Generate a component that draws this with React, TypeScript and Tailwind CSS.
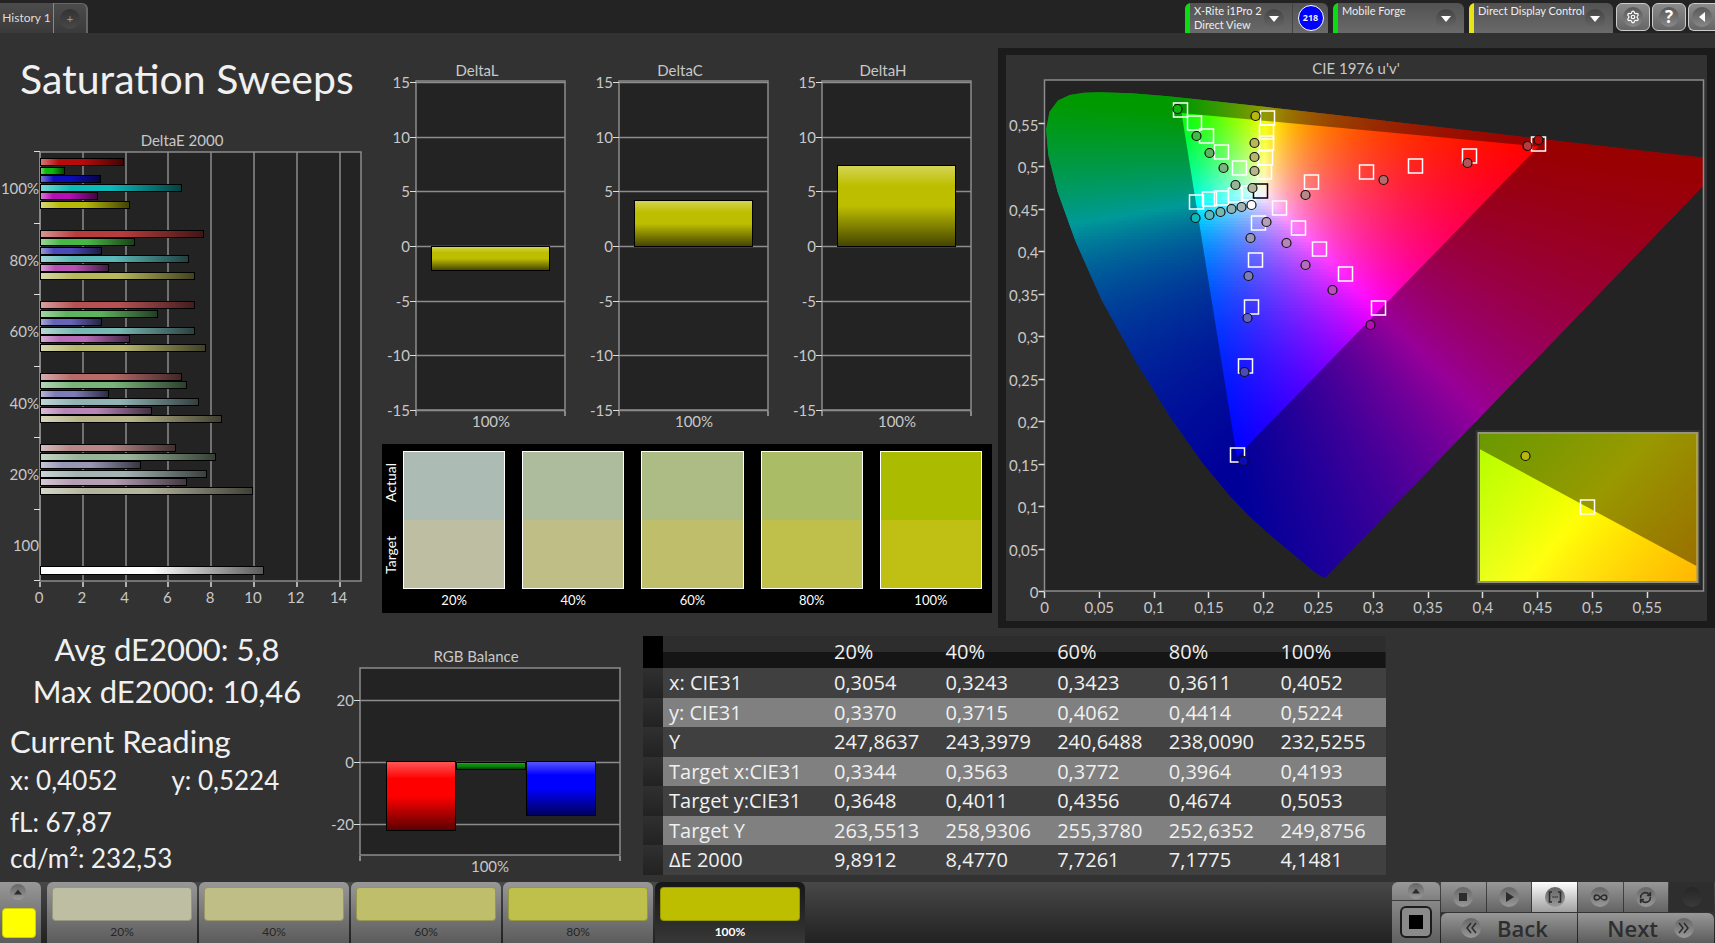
import type { ReactNode } from "react";
import clsx from "clsx";
import { Infinity as InfinityIcon, RefreshCw, Settings } from "lucide-react";

type Point = [number, number];

const AXIS = "#8c8c8c";
const LABEL = "#c8c8c8";

/* ---------- measured data ---------- */

const SWEEPS = [
  {
    label: "100%",
    values: [3.87, 1.1, 2.8, 6.6, 2.65, 4.15],
    colors: ["#b80c0c", "#0cb80c", "#0c0cb8", "#0cb8b8", "#b80cb8", "#b8b80c"],
  },
  {
    label: "80%",
    values: [7.6, 4.4, 2.85, 6.9, 3.2, 7.18],
    colors: ["#b83c3c", "#46b846", "#4a4ab8", "#5ab8b8", "#b850b8", "#b8b85a"],
  },
  {
    label: "60%",
    values: [7.2, 5.45, 2.85, 7.2, 4.15, 7.73],
    colors: ["#b85252", "#5eb45e", "#6464b8", "#78b8b4", "#b86cb8", "#b6b66c"],
  },
  {
    label: "40%",
    values: [6.6, 6.8, 3.2, 7.4, 5.17, 8.48],
    colors: ["#b86a6a", "#7ab47a", "#7c7cb6", "#90b4b4", "#b886b6", "#b6b488"],
  },
  {
    label: "20%",
    values: [6.3, 8.2, 4.67, 7.75, 6.8, 9.89],
    colors: ["#b88888", "#98b498", "#9898b6", "#a4b4b4", "#b69eb4", "#b4b49c"],
  },
];

const DELTAS = [
  { name: "DeltaL", value: -2.2 },
  { name: "DeltaC", value: 4.2 },
  { name: "DeltaH", value: 7.4 },
];

const SWATCHES = [
  { label: "20%", actual: "#acbcb4", target: "#bebea2" },
  { label: "40%", actual: "#adbc9d", target: "#bfbe86" },
  { label: "60%", actual: "#adbc84", target: "#bfbe6b" },
  { label: "80%", actual: "#abbc67", target: "#bfbf4c" },
  { label: "100%", actual: "#abbb00", target: "#c0c014" },
];

const TABLE = [
  ["x: CIE31", "0,3054", "0,3243", "0,3423", "0,3611", "0,4052"],
  ["y: CIE31", "0,3370", "0,3715", "0,4062", "0,4414", "0,5224"],
  ["Y", "247,8637", "243,3979", "240,6488", "238,0090", "232,5255"],
  ["Target x:CIE31", "0,3344", "0,3563", "0,3772", "0,3964", "0,4193"],
  ["Target y:CIE31", "0,3648", "0,4011", "0,4356", "0,4674", "0,5053"],
  ["Target Y", "263,5513", "258,9306", "255,3780", "252,6352", "249,8756"],
  ["ΔE 2000", "9,8912", "8,4770", "7,7261", "7,1775", "4,1481"],
];

const TARGETS: Point[] = [
  [136, 30], [150, 43], [162, 56], [177, 72], [195, 88],
  [152, 122], [165, 119], [177, 118], [191, 115], [204, 113],
  [220, 92], [221, 78], [222, 63], [222, 52], [223, 38],
  [235, 128], [254, 148], [275, 169], [301, 194], [334, 228],
  [214, 143], [211, 180], [207, 227], [201, 286], [193, 375],
  [267, 102], [322, 92], [371, 86], [425, 76], [494, 64],
];

// one list per primary, 100% first, in the order of SWEEPS[].colors
const READINGS: Point[][] = [
  [[494, 60], [483, 66], [423, 83], [339, 100], [261, 115]],
  [[133, 29], [152, 56], [165, 73], [179, 88], [191, 105]],
  [[199, 381], [200, 292], [203, 238], [204, 196], [206, 158]],
  [[151, 138], [165, 135], [176, 132], [187, 129], [197, 127]],
  [[326, 245], [288, 210], [261, 185], [242, 163], [222, 142]],
  [[211, 36], [210, 63], [210, 77], [210, 91], [208, 108]],
];

// spectral locus, CIE 1931 xy, 380nm to 700nm
const LOCUS: Point[] = [
  [0.1741, 0.005], [0.1726, 0.0048], [0.1689, 0.0069], [0.1644, 0.0109],
  [0.1566, 0.0177], [0.151, 0.0227], [0.144, 0.0297], [0.1355, 0.0399],
  [0.1241, 0.0578], [0.1096, 0.0868], [0.0913, 0.1327], [0.0687, 0.2007],
  [0.0454, 0.295], [0.0235, 0.4127], [0.0082, 0.5384], [0.0039, 0.6548],
  [0.0139, 0.7502], [0.0389, 0.812], [0.0743, 0.8338], [0.1142, 0.8262],
  [0.1547, 0.8059], [0.2296, 0.7543], [0.3016, 0.6923], [0.3731, 0.6245],
  [0.4441, 0.5547], [0.5125, 0.4866], [0.5752, 0.4242], [0.627, 0.3725],
  [0.6915, 0.3083], [0.7347, 0.2653],
];

/* ---------- colour maths ---------- */

const U_SCALE = 1096;
const V_SCALE = 850;
const PLOT_W = 659;
const PLOT_H = 511;

function xyToPlot([x, y]: Point): Point {
  const d = -2 * x + 12 * y + 3;
  return [((4 * x) / d) * U_SCALE, PLOT_H - ((9 * y) / d) * V_SCALE];
}

function toPoints(list: Point[]) {
  return list.map(([x, y]) => `${x.toFixed(1)},${y.toFixed(1)}`).join(" ");
}

function xyzToCss(X: number, Y: number, Z: number) {
  const rgb = [
    3.2406 * X - 1.5372 * Y - 0.4986 * Z,
    -0.9689 * X + 1.8758 * Y + 0.0415 * Z,
    0.0557 * X - 0.204 * Y + 1.057 * Z,
  ].map((c) => Math.max(0, c));
  const peak = Math.max(...rgb, 0.0001);
  return `rgb(${rgb.map((c) => Math.round((255 * c) / peak)).join(",")})`;
}

function plotColor(px: number, py: number) {
  const u = px / U_SCALE;
  const v = (PLOT_H - py) / V_SCALE;
  return xyzToCss(9 * u, 4 * v, 12 - 3 * u - 20 * v);
}

const INSET = { x: 435, y: 354, w: 217, h: 147 };

// the inset is a plain xy close-up around the 100% yellow target
function insetColor(px: number, py: number) {
  const x = 0.4193 + (px - 543) / 4400;
  const y = 0.5053 - (py - 427) / 2980;
  return xyzToCss(x, y, 1 - x - y);
}

function ColorField({
  id, x, y, w, h, step, stops, color,
}: {
  id: string;
  x: number;
  y: number;
  w: number;
  h: number;
  step: number;
  stops: number;
  color: (px: number, py: number) => string;
}) {
  const rows = Array.from({ length: Math.ceil(h / step) }, (_, i) => y + i * step);
  return (
    <g id={id} shapeRendering="crispEdges">
      {rows.map((top, i) => (
        <g key={top}>
          <linearGradient id={`${id}-${i}`}>
            {Array.from({ length: stops + 1 }, (_, s) => (
              <stop
                key={s}
                offset={s / stops}
                stopColor={color(x + (w * s) / stops, top + step / 2)}
              />
            ))}
          </linearGradient>
          <rect x={x} y={top} width={w} height={Math.min(step, y + h - top)} fill={`url(#${id}-${i})`} />
        </g>
      ))}
    </g>
  );
}

/* ---------- charts ---------- */

function Shades() {
  return (
    <defs>
      <linearGradient id="shade-h">
        <stop offset="0" stopColor="#fff" stopOpacity="0.45" />
        <stop offset="0.22" stopColor="#fff" stopOpacity="0" />
        <stop offset="0.5" stopColor="#000" stopOpacity="0" />
        <stop offset="1" stopColor="#000" stopOpacity="0.65" />
      </linearGradient>
      <linearGradient id="shade-v" x2="0" y2="1">
        <stop offset="0" stopColor="#fff" stopOpacity="0.35" />
        <stop offset="0.25" stopColor="#fff" stopOpacity="0" />
        <stop offset="0.5" stopColor="#000" stopOpacity="0" />
        <stop offset="1" stopColor="#000" stopOpacity="0.65" />
      </linearGradient>
    </defs>
  );
}

function Bar({
  x, y, w, h, color, shade,
}: {
  x: number;
  y: number;
  w: number;
  h: number;
  color: string;
  shade: "h" | "v";
}) {
  return (
    <g>
      <rect x={x} y={y} width={w} height={h} fill={color} />
      <rect x={x} y={y} width={w} height={h} fill={`url(#shade-${shade})`} stroke="#000" />
    </g>
  );
}

function DeltaEChart() {
  const unit = 21.4;
  return (
    <svg viewBox="0 0 372 490" className="block h-auto w-full" fontSize="15" fill={LABEL}>
      <Shades />
      <text x="182" y="16" textAnchor="middle">DeltaE 2000</text>
      <rect x="40" y="22" width="321" height="429" fill="#232323" />
      {[0, 2, 4, 6, 8, 10, 12, 14].map((v) => (
        <g key={v}>
          <path d={`M${Math.round(40 + v * unit)} 22V451`} stroke={AXIS} strokeWidth="1.5" />
          <path d={`M${Math.round(40 + v * unit)} 452v5`} stroke="#ddd" strokeWidth="1.5" />
          <text x={39 + v * unit} y="473" textAnchor="middle">{v}</text>
        </g>
      ))}
      <rect x="40" y="22" width="321" height="429" fill="none" stroke={AXIS} strokeWidth="1.5" />
      {[0, 1, 2, 3, 4, 5, 6].map((i) => (
        <path key={i} d={`M34 ${21.5 + Math.round(i * 71.5)}h6`} stroke="#ddd" />
      ))}
      {SWEEPS.map((sweep, g) => (
        <g key={sweep.label}>
          <text x="39" y={Math.round(64 + g * 71.5)} textAnchor="end">{sweep.label}</text>
          {sweep.values.map((value, i) => (
            <Bar
              key={i}
              x={40.5}
              y={Math.round(28 + g * 71.5 + i * 8.5) + 0.5}
              w={Math.round(value * unit)}
              h={7}
              color={sweep.colors[i]}
              shade="h"
            />
          ))}
        </g>
      ))}
      <text x="39" y="421" textAnchor="end">100</text>
      <Bar x={40.5} y={436.5} w={223} h={8} color="#fff" shade="h" />
    </svg>
  );
}

function DeltaCharts() {
  const zero = 213;
  const unit = 10.93;
  return (
    <svg viewBox="0 0 626 411" className="block h-auto w-full" fontSize="15" fill={LABEL}>
      {DELTAS.map(({ name, value }, i) => (
        <g key={name} transform={`translate(${44 + i * 203} 0)`}>
          <text x="61" y="43" textAnchor="middle">{name}</text>
          <rect x="0" y="48" width="149" height="329" fill="#232323" stroke={AXIS} strokeWidth="1.5" />
          {[15, 10, 5, 0, -5, -10, -15].map((v) => {
            const y = Math.round(zero - v * unit) + 0.5;
            return (
              <g key={v}>
                <path d={`M0 ${y}h149`} stroke={AXIS} strokeWidth="1.5" />
                <path d={`M-6 ${y}h6`} stroke="#ddd" />
                <text x="-6" y={y + 5} textAnchor="end">{v}</text>
              </g>
            );
          })}
          <path d="M0 378v5M149 378v5" stroke="#ddd" />
          <Bar
            x={15.5}
            y={Math.round(value > 0 ? zero - value * unit : zero) + 0.5}
            w={118}
            h={Math.round(Math.abs(value) * unit)}
            color="#bebe00"
            shade="v"
          />
          <text x="75" y="394" textAnchor="middle">100%</text>
        </g>
      ))}
    </svg>
  );
}

function RgbBalance() {
  return (
    <svg viewBox="0 0 319 246" className="block h-auto w-full" fontSize="15" fill={LABEL}>
      <text x="152" y="26" textAnchor="middle">RGB Balance</text>
      <rect x="36" y="32" width="260" height="187" fill="#232323" stroke={AXIS} strokeWidth="1.5" />
      {[20, 0, -20].map((v) => {
        const y = Math.round(126 - v * 3.1) + 0.5;
        return (
          <g key={v}>
            <path d={`M36 ${y}h260`} stroke={AXIS} strokeWidth="1.5" />
            <path d={`M30 ${y}h6`} stroke="#ddd" />
            <text x="30" y={y + 5} textAnchor="end">{v}</text>
          </g>
        );
      })}
      <Bar x={62.5} y={125.5} w={69} h={69} color="#ff0000" shade="v" />
      <Bar x={132.5} y={126.5} w={69} h={7} color="#0c8c0c" shade="v" />
      <Bar x={202.5} y={125.5} w={69} h={54} color="#0000ff" shade="v" />
      <path d="M36 220v5M296 220v5" stroke="#ddd" />
      <text x="166" y="236" textAnchor="middle">100%</text>
    </svg>
  );
}

function Target({ at: [x, y], color = "#fff" }: { at: Point; color?: string }) {
  return <rect x={x - 7} y={y - 7} width="14" height="14" fill="none" stroke={color} strokeWidth="1.5" />;
}

function Reading({ at: [x, y], fill }: { at: Point; fill: string }) {
  return <circle cx={x} cy={y} r="4.5" fill={fill} stroke="#111" strokeWidth="1.2" />;
}

function decimal(value: number) {
  return String(Math.round(value * 100) / 100).replace(".", ",");
}

function CieChart() {
  const ticks = Array.from({ length: 12 }, (_, i) => i * 0.05);
  const gamut = toPoints([xyToPlot([0.3, 0.6]), xyToPlot([0.64, 0.33]), xyToPlot([0.15, 0.06])]);
  const { x, y, w, h } = INSET;
  return (
    <svg viewBox="0 0 701 566" className="block h-auto w-full bg-[#323232]" fontSize="15" fill={LABEL}>
      <defs>
        <clipPath id="locus"><polygon points={toPoints(LOCUS.map(xyToPlot))} /></clipPath>
        <clipPath id="gamut"><polygon points={gamut} /></clipPath>
        <clipPath id="plot"><rect width={PLOT_W} height={PLOT_H} /></clipPath>
      </defs>
      <text x="350" y="19" textAnchor="middle">CIE 1976 u'v'</text>
      <g transform="translate(38.5 25)">
        <rect width={PLOT_W} height={PLOT_H} fill="#232323" />
        <g clipPath="url(#plot)">
          <g clipPath="url(#locus)">
            <ColorField id="field" x={0} y={0} w={660} h={510} step={3} stops={60} color={plotColor} />
            <rect width={PLOT_W} height={PLOT_H} fill="#000" opacity="0.4" />
          </g>
          <g clipPath="url(#gamut)"><use href="#field" /></g>
        </g>
        <rect width={PLOT_W} height={PLOT_H} fill="none" stroke={AXIS} strokeWidth="1.5" />
        {ticks.map((t) => (
          <g key={t}>
            <path d={`M${Math.round(t * U_SCALE)} ${PLOT_H + 1}v6`} stroke="#ddd" strokeWidth="1.5" />
            <text x={t * U_SCALE} y={PLOT_H + 22} textAnchor="middle">{decimal(t)}</text>
            <path d={`M-6 ${Math.round(PLOT_H - t * V_SCALE) + 0.5}h6`} stroke="#ddd" strokeWidth="1.5" />
            <text x="-6" y={PLOT_H - t * V_SCALE + 7} textAnchor="end">{decimal(t)}</text>
          </g>
        ))}
        {TARGETS.map((p) => <Target key={p.join()} at={p} />)}
        <Target at={[216, 111]} color="#000" />
        {READINGS.map((list, hue) =>
          list.map((p, i) => <Reading key={p.join()} at={p} fill={SWEEPS[i].colors[hue]} />),
        )}
        <Reading at={[207, 125]} fill="#fff" />

        <rect x={x - 4} y={y - 4} width={w + 8} height={h + 8} fill="#323232" />
        <ColorField id="inset" x={x} y={y} w={w} h={h} step={3} stops={24} color={insetColor} />
        <polygon points={`${x},${y} ${x + w},${y} ${x + w},486 ${x},369`} fill="#000" opacity="0.4" />
        <rect x={x - 1} y={y - 1} width={w + 2} height={h + 2} fill="none" stroke="#96967e" strokeWidth="2" />
        <Reading at={[481, 376]} fill="#b8b80c" />
        <Target at={[543, 427]} />
      </g>
    </svg>
  );
}

/* ---------- chrome ---------- */

function Disc({
  children, size = "size-5", tone = "from-[#666] to-[#999] text-[#2c2c2c]",
}: {
  children?: ReactNode;
  size?: string;
  tone?: string;
}) {
  return (
    <span className={clsx("flex shrink-0 items-center justify-center rounded-full bg-linear-to-b", size, tone)}>
      {children}
    </span>
  );
}

function Triangle({ d, size = 10 }: { d: string; size?: number }) {
  return (
    <svg width={size} height={size} viewBox="0 0 10 10" aria-hidden="true">
      <path d={d} fill="currentColor" />
    </svg>
  );
}

const DOWN = "M0 2h10L5 8z";
const UP = "M0 8h10L5 2z";
const LEFT = "M8 0v10L2 5z";
const RIGHT = "M2 0v10l8-5z";

function Device({
  lines, stripe, className, children,
}: {
  lines: string[];
  stripe: string;
  className: string;
  children?: ReactNode;
}) {
  return (
    <div className={clsx("flex shrink-0 overflow-hidden rounded-t-md bg-linear-to-b from-[#525252] to-[#6a6a6a]", className)}>
      <span className={clsx("w-[5px] shrink-0", stripe)} />
      <button type="button" className="flex flex-1 items-start justify-between pr-2 pl-1 text-left">
        <span className="pt-px whitespace-nowrap">
          {lines.map((line) => (
            <span key={line} className="block">{line}</span>
          ))}
        </span>
        <span className="pt-1.5">
          <Disc tone="from-[#444] to-[#686868] text-white">
            <Triangle d={DOWN} />
          </Disc>
        </span>
      </button>
      {children}
    </div>
  );
}

const TOOL = "flex items-center justify-center border border-[#ccc] bg-linear-to-b from-[#8a8a8a] to-[#666]";
const TOOL_DISC = "from-[#585858] to-[#888] text-white";

function Header() {
  return (
    <header className="flex h-[33px] items-end justify-between bg-[#232323] text-[11px] leading-[14px] text-[#eee]">
      <div className="flex h-[30px]">
        <button type="button" className="w-[54px] border-r border-[#888] bg-linear-to-b from-[#4c4c4c] to-[#3a3a3a] text-[12px] text-[#ddd]">
          History 1
        </button>
        <button
          type="button"
          aria-label="Add history"
          className="flex w-[34px] items-center justify-center rounded-tr-md border-t border-r-2 border-[#666] bg-linear-to-b from-[#4c4c4c] to-[#3a3a3a]"
        >
          <Disc tone="from-[#333] to-[#484848] text-[#999]">+</Disc>
        </button>
      </div>
      <div className="flex h-[30px]">
        <Device lines={["X-Rite i1Pro 2", "Direct View"]} stripe="bg-[#0bdc12]" className="w-[143px]">
          <span className="flex w-9 items-center justify-center border-l border-[#444]">
            <span className="flex size-[26px] items-center justify-center rounded-full border border-white bg-[#0000ff] font-['Open_Sans'] text-[9px] font-bold">
              218
            </span>
          </span>
        </Device>
        <Device lines={["Mobile Forge"]} stripe="bg-[#0bdc12]" className="ml-[5px] w-[131px]" />
        <Device lines={["Direct Display Control"]} stripe="bg-[#e8e418]" className="ml-[5px] w-[144px]" />
        <div className="ml-[3px] flex h-7 gap-0.5">
          <button type="button" aria-label="Settings" className={clsx(TOOL, "w-[34px] rounded-md")}>
            <Disc tone={TOOL_DISC}><Settings size={14} /></Disc>
          </button>
          <button type="button" aria-label="Help" className={clsx(TOOL, "w-[34px] rounded-md font-['Open_Sans'] text-[17px] font-bold")}>
            <Disc tone={TOOL_DISC}>?</Disc>
          </button>
          <button type="button" aria-label="Collapse" className={clsx(TOOL, "w-[27px] rounded-l-md border-r-0")}>
            <Disc tone={TOOL_DISC}><Triangle d={LEFT} /></Disc>
          </button>
        </div>
      </div>
    </header>
  );
}

function Comparison() {
  return (
    <div className="mr-1.5 ml-2.5 flex bg-black pt-[7px] pr-2.5 pb-1 text-[13px] leading-[18px] text-white">
      <div className="mr-1 flex h-[138px] w-[17px] flex-col text-[14px]">
        <span className="flex h-[62px] rotate-180 items-center justify-center [writing-mode:vertical-rl]">Actual</span>
        <span className="flex flex-1 rotate-180 items-center justify-center pb-2 [writing-mode:vertical-rl]">Target</span>
      </div>
      <div className="grid flex-1 grid-cols-5 gap-x-[17px]">
        {SWATCHES.map(({ label, actual, target }) => (
          <div key={label} className="text-center">
            <div className="flex h-[138px] flex-col border border-white">
              <div className="flex-1" style={{ backgroundColor: actual }} />
              <div className="flex-1" style={{ backgroundColor: target }} />
            </div>
            <div className="pt-0.5">{label}</div>
          </div>
        ))}
      </div>
    </div>
  );
}

function Stats() {
  return (
    <section className="-mt-2 pl-2.5 text-[26px] leading-9 text-[#f0f0f0]">
      <div className="text-center text-[31px] leading-[42px]">
        <p>Avg dE2000: 5,8</p>
        <p>Max dE2000: 10,46</p>
      </div>
      <h2 className="mt-2 text-[31px] leading-[42px]">Current Reading</h2>
      <div className="flex gap-[54px] whitespace-nowrap">
        <span>x: 0,4052</span>
        <span>y: 0,5224</span>
      </div>
      <p className="mt-1.5">fL: 67,87</p>
      <p>cd/m²: 232,53</p>
    </section>
  );
}

function ResultsTable() {
  return (
    <table className="w-full table-fixed border-collapse text-left font-['Open_Sans'] text-[20px] text-[#f0f0f0]">
      <colgroup>
        <col className="w-5" />
        <col className="w-[165px]" />
        <col span={5} />
      </colgroup>
      <thead>
        <tr className="bg-linear-to-b from-[#2d2d2d] from-50% to-[#151515] to-50% leading-8">
          <th className="bg-black" />
          <th />
          {SWATCHES.map(({ label }) => (
            <th key={label} scope="col" className="p-0 pl-1.5 font-normal">{label}</th>
          ))}
        </tr>
      </thead>
      <tbody>
        {TABLE.map(([name, ...cells], i) => (
          <tr key={name} className={clsx(i % 2 ? "bg-[#808080] leading-[29px]" : "bg-[#404040] leading-[30px]")}>
            <td className="bg-linear-to-b from-[#303030] to-[#222]" />
            <th scope="row" className="p-0 pl-1.5 font-normal whitespace-nowrap">{name}</th>
            {cells.map((cell) => (
              <td key={cell} className="p-0 pl-1.5">{cell}</td>
            ))}
          </tr>
        ))}
      </tbody>
    </table>
  );
}

const METAL = "bg-linear-to-b from-[#989898] to-[#5c5c5c]";
const STEP = "col-span-3 flex items-center gap-4 font-['Open_Sans'] text-[22px] leading-[30px] font-semibold text-[#2e2e2e]";

function Footer() {
  const controls: { label: string; icon: ReactNode; className?: string }[] = [
    { label: "Stop", icon: <span className="size-2 bg-current" /> },
    { label: "Play", icon: <Triangle d={RIGHT} /> },
    {
      label: "Range",
      className: "from-white to-[#a0a0a0]",
      icon: (
        <svg width="14" height="12" viewBox="0 0 14 12" fill="none" stroke="currentColor" strokeWidth="1.6">
          <path d="M4 1H1.500v10H4M10 1h2.500v10H10M4.500 6h1.200M6.500 6h1.200M8.500 6h1.200" />
        </svg>
      ),
    },
    { label: "Loop", icon: <InfinityIcon size={15} strokeWidth={2.5} /> },
    { label: "Refresh", icon: <RefreshCw size={13} strokeWidth={3} /> },
  ];

  return (
    <footer className="flex h-[61px] justify-between bg-linear-to-b from-[#484848] to-[#222]">
      <div className="flex">
        <button type="button" aria-label="Current color" className={clsx("flex w-[41px] flex-col items-start rounded-tr-md pt-0.5 pl-0.5", METAL)}>
          <span className="pl-2"><Disc size="size-4"><Triangle d={UP} size={8} /></Disc></span>
          <span className="mt-2 h-[30px] w-[34px] rounded-sm border border-[#d0d000] bg-[#ffff00]" />
        </button>
        <div className="ml-1.5 flex gap-0.5">
          {SWATCHES.map(({ label, target }, i) => {
            const active = i === SWATCHES.length - 1;
            return (
              <button
                key={label}
                type="button"
                aria-pressed={active}
                className={clsx(
                  "flex w-[150px] flex-col items-center rounded-t-md pt-[5px] text-[12px] leading-[22px]",
                  active ? "bg-linear-to-b from-[#161616] to-[#383838] font-bold text-white" : clsx(METAL, "text-[#262626]"),
                )}
              >
                <span
                  className="h-9 w-[140px] rounded border border-black/20"
                  style={{ backgroundColor: active ? "#bebe00" : target }}
                />
                {label}
              </button>
            );
          })}
        </div>
      </div>

      <div className="flex gap-px pr-px">
        <div className="flex w-12 flex-col gap-px">
          <button type="button" aria-label="Expand" className="flex h-[18px] items-center justify-center rounded-t-md bg-linear-to-b from-[#999] to-[#808080]">
            <Disc size="size-4"><Triangle d={UP} size={8} /></Disc>
          </button>
          <button type="button" aria-label="Pattern window" className="flex flex-1 items-center justify-center bg-linear-to-b from-[#888] to-[#606060]">
            <span className="flex size-8 items-center justify-center rounded-md border-2 border-[#1c1c1c] bg-[#8a8a8a]">
              <span className="size-3.5 bg-black" />
            </span>
          </button>
        </div>
        <div className="grid w-[273px] grid-cols-6 gap-px">
          {controls.map(({ label, icon, className }) => (
            <button
              key={label}
              type="button"
              aria-label={label}
              className={clsx("flex h-[30px] items-center justify-center bg-linear-to-b", className ?? "from-[#989898] to-[#646464]")}
            >
              <Disc>{icon}</Disc>
            </button>
          ))}
          <button type="button" aria-label="Record" disabled className="flex h-[30px] items-center justify-center bg-[#2e2e2e]">
            <Disc tone="from-[#262626] to-[#3a3a3a]" />
          </button>
          <button type="button" className={clsx(STEP, METAL, "rounded-tl-md pl-5")}>
            <Disc><Chevrons d="M6 1 2 6l4 5M11 1 7 6l4 5" /></Disc>
            Back
          </button>
          <button type="button" className={clsx(STEP, METAL, "justify-end rounded-tr-md pr-5")}>
            Next
            <Disc><Chevrons d="m1 1 4 5-4 5M6 1l4 5-4 5" /></Disc>
          </button>
        </div>
      </div>
    </footer>
  );
}

function Chevrons({ d }: { d: string }) {
  return (
    <svg width="12" height="12" viewBox="0 0 12 12" fill="none" stroke="currentColor" strokeWidth="1.5" aria-hidden="true">
      <path d={d} />
    </svg>
  );
}

export default function App() {
  return (
    <div className="flex min-h-screen flex-col overflow-hidden bg-[#323232] font-['Lato',sans-serif]">
      <Header />
      <main className="flex-1">
        <div className="grid grid-cols-[372fr_626fr_717fr] items-start">
          <section>
            <h1 className="pt-[22px] pl-5 text-[41px] leading-[48px] whitespace-nowrap text-[#f0f0f0]">Saturation Sweeps</h1>
            <div className="pt-[27px]"><DeltaEChart /></div>
          </section>
          <section>
            <DeltaCharts />
            <Comparison />
          </section>
          <section className="mt-[15px] bg-[#1b1b1b] px-2 py-[7px]">
            <CieChart />
          </section>
        </div>
        <div className="mt-2 grid grid-cols-[324fr_319fr_743fr_329fr] items-start">
          <Stats />
          <RgbBalance />
          <ResultsTable />
        </div>
      </main>
      <Footer />
    </div>
  );
}
